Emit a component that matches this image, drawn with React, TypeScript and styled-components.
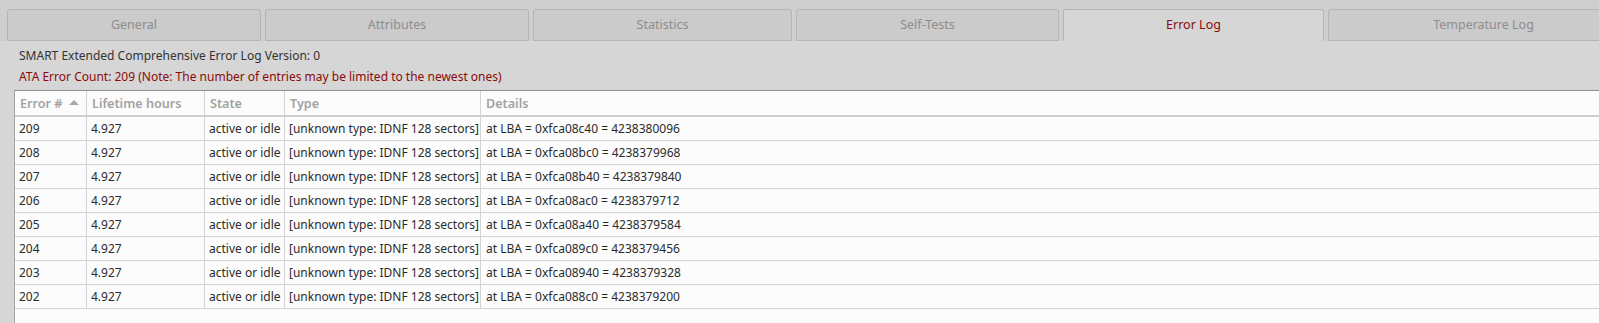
import React from "react";
import styled, { createGlobalStyle } from "styled-components";

const Global = createGlobalStyle`
  html, body { margin: 0; padding: 0; }
  body { background: #cfcfcf; font-family: "Noto Sans", "DejaVu Sans", sans-serif; }
`;

const Window = styled.div`
  width: 1599px;
  height: 323px;
  overflow: hidden;
  background: #cfcfcf;
  display: flex;
  flex-direction: column;
  font-size: 12px;
`;

const TabBar = styled.div`
  display: flex;
  align-items: flex-end;
  gap: 4px;
  padding: 9px 0 0 7px;
  height: 32px;
  box-sizing: content-box;
`;

const Tab = styled.div<{ $w?: number; $active?: boolean }>`
  ${(p) => (p.$w ? `width: ${p.$w}px; flex: none;` : `flex: 1;`)}
  height: 32px;
  box-sizing: border-box;
  display: flex;
  align-items: center;
  justify-content: center;
  border: 1px solid #b5b5b5;
  border-radius: 3px 3px 0 0;
  border-bottom-color: ${(p) => (p.$active ? "#d6d6d6" : "#b5b5b5")};
  background: ${(p) => (p.$active ? "#d6d6d6" : "#cbcbcb")};
  color: ${(p) => (p.$active ? "#8b0a0a" : "#8d8d8d")};
  font-size: 12.5px;
  padding-bottom: 1px;
  margin-right: ${(p) => (p.$w ? 0 : -40)}px;
`;

const Pane = styled.div`
  flex: 1;
  background: #d6d6d6;
  display: flex;
  flex-direction: column;
  padding: 4px 0 0 14px;
  min-height: 0;
`;

const InfoLine = styled.div<{ $warn?: boolean }>`
  line-height: 21px;
  padding-left: 5px;
  color: ${(p) => (p.$warn ? "#8b0a0a" : "#333333")};
`;

const TableFrame = styled.div`
  margin-top: 3px;
  flex: 1;
  background: #fcfcfc;
  border-top: 1px solid #8e8e8e;
  border-left: 1px solid #a4a4a4;
  margin-right: -10px;
`;

const Row = styled.div<{ $head?: boolean }>`
  display: grid;
  grid-template-columns: 72px 118px 80px 196px 1fr;
  height: ${(p) => (p.$head ? 26 : 24)}px;
  box-sizing: border-box;
  border-bottom: ${(p) => (p.$head ? "2px solid #cdcdcd" : "1px solid #d2d2d2")};
`;

const Cell = styled.div<{ $head?: boolean }>`
  display: flex;
  align-items: center;
  gap: 7px;
  padding-left: ${(p) => (p.$head ? 5 : 4)}px;
  border-right: 1px solid #d4d4d4;
  white-space: nowrap;
  overflow: hidden;
  color: ${(p) => (p.$head ? "#a2a2a2" : "#2b2b2b")};
  font-weight: ${(p) => (p.$head ? 600 : 400)};
  font-size: ${(p) => (p.$head ? 12.6 : 12)}px;
  &:last-child { border-right: none; padding-left: 5px; }
`;

const SortArrow = styled.span`
  width: 0;
  height: 0;
  border-left: 5px solid transparent;
  border-right: 5px solid transparent;
  border-bottom: 5px solid #a8a8a8;
  margin-top: -1px;
`;

const tabs: { label: string; w?: number; active?: boolean }[] = [
  { label: "General", w: 254 },
  { label: "Attributes", w: 264 },
  { label: "Statistics", w: 259 },
  { label: "Self-Tests", w: 263 },
  { label: "Error Log", w: 261, active: true },
  { label: "Temperature Log" },
];

const rows = [
  ["209", "0xfca08c40", "4238380096"],
  ["208", "0xfca08bc0", "4238379968"],
  ["207", "0xfca08b40", "4238379840"],
  ["206", "0xfca08ac0", "4238379712"],
  ["205", "0xfca08a40", "4238379584"],
  ["204", "0xfca089c0", "4238379456"],
  ["203", "0xfca08940", "4238379328"],
  ["202", "0xfca088c0", "4238379200"],
];

export default function App() {
  return (
    <Window>
      <Global />
      <TabBar>
        {tabs.map((t) => (
          <Tab key={t.label} $w={t.w} $active={t.active}>
            {t.label}
          </Tab>
        ))}
      </TabBar>
      <Pane>
        <InfoLine>SMART Extended Comprehensive Error Log Version: 0</InfoLine>
        <InfoLine $warn>
          ATA Error Count: 209 (Note: The number of entries may be limited to the newest ones)
        </InfoLine>
        <TableFrame>
          <Row $head>
            <Cell $head>
              Error # <SortArrow />
            </Cell>
            <Cell $head>Lifetime hours</Cell>
            <Cell $head>State</Cell>
            <Cell $head>Type</Cell>
            <Cell $head>Details</Cell>
          </Row>
          {rows.map(([n, hex, dec]) => (
            <Row key={n}>
              <Cell>{n}</Cell>
              <Cell>4.927</Cell>
              <Cell>active or idle</Cell>
              <Cell>[unknown type: IDNF 128 sectors]</Cell>
              <Cell>
                at LBA = {hex} = {dec}
              </Cell>
            </Row>
          ))}
        </TableFrame>
      </Pane>
    </Window>
  );
}
